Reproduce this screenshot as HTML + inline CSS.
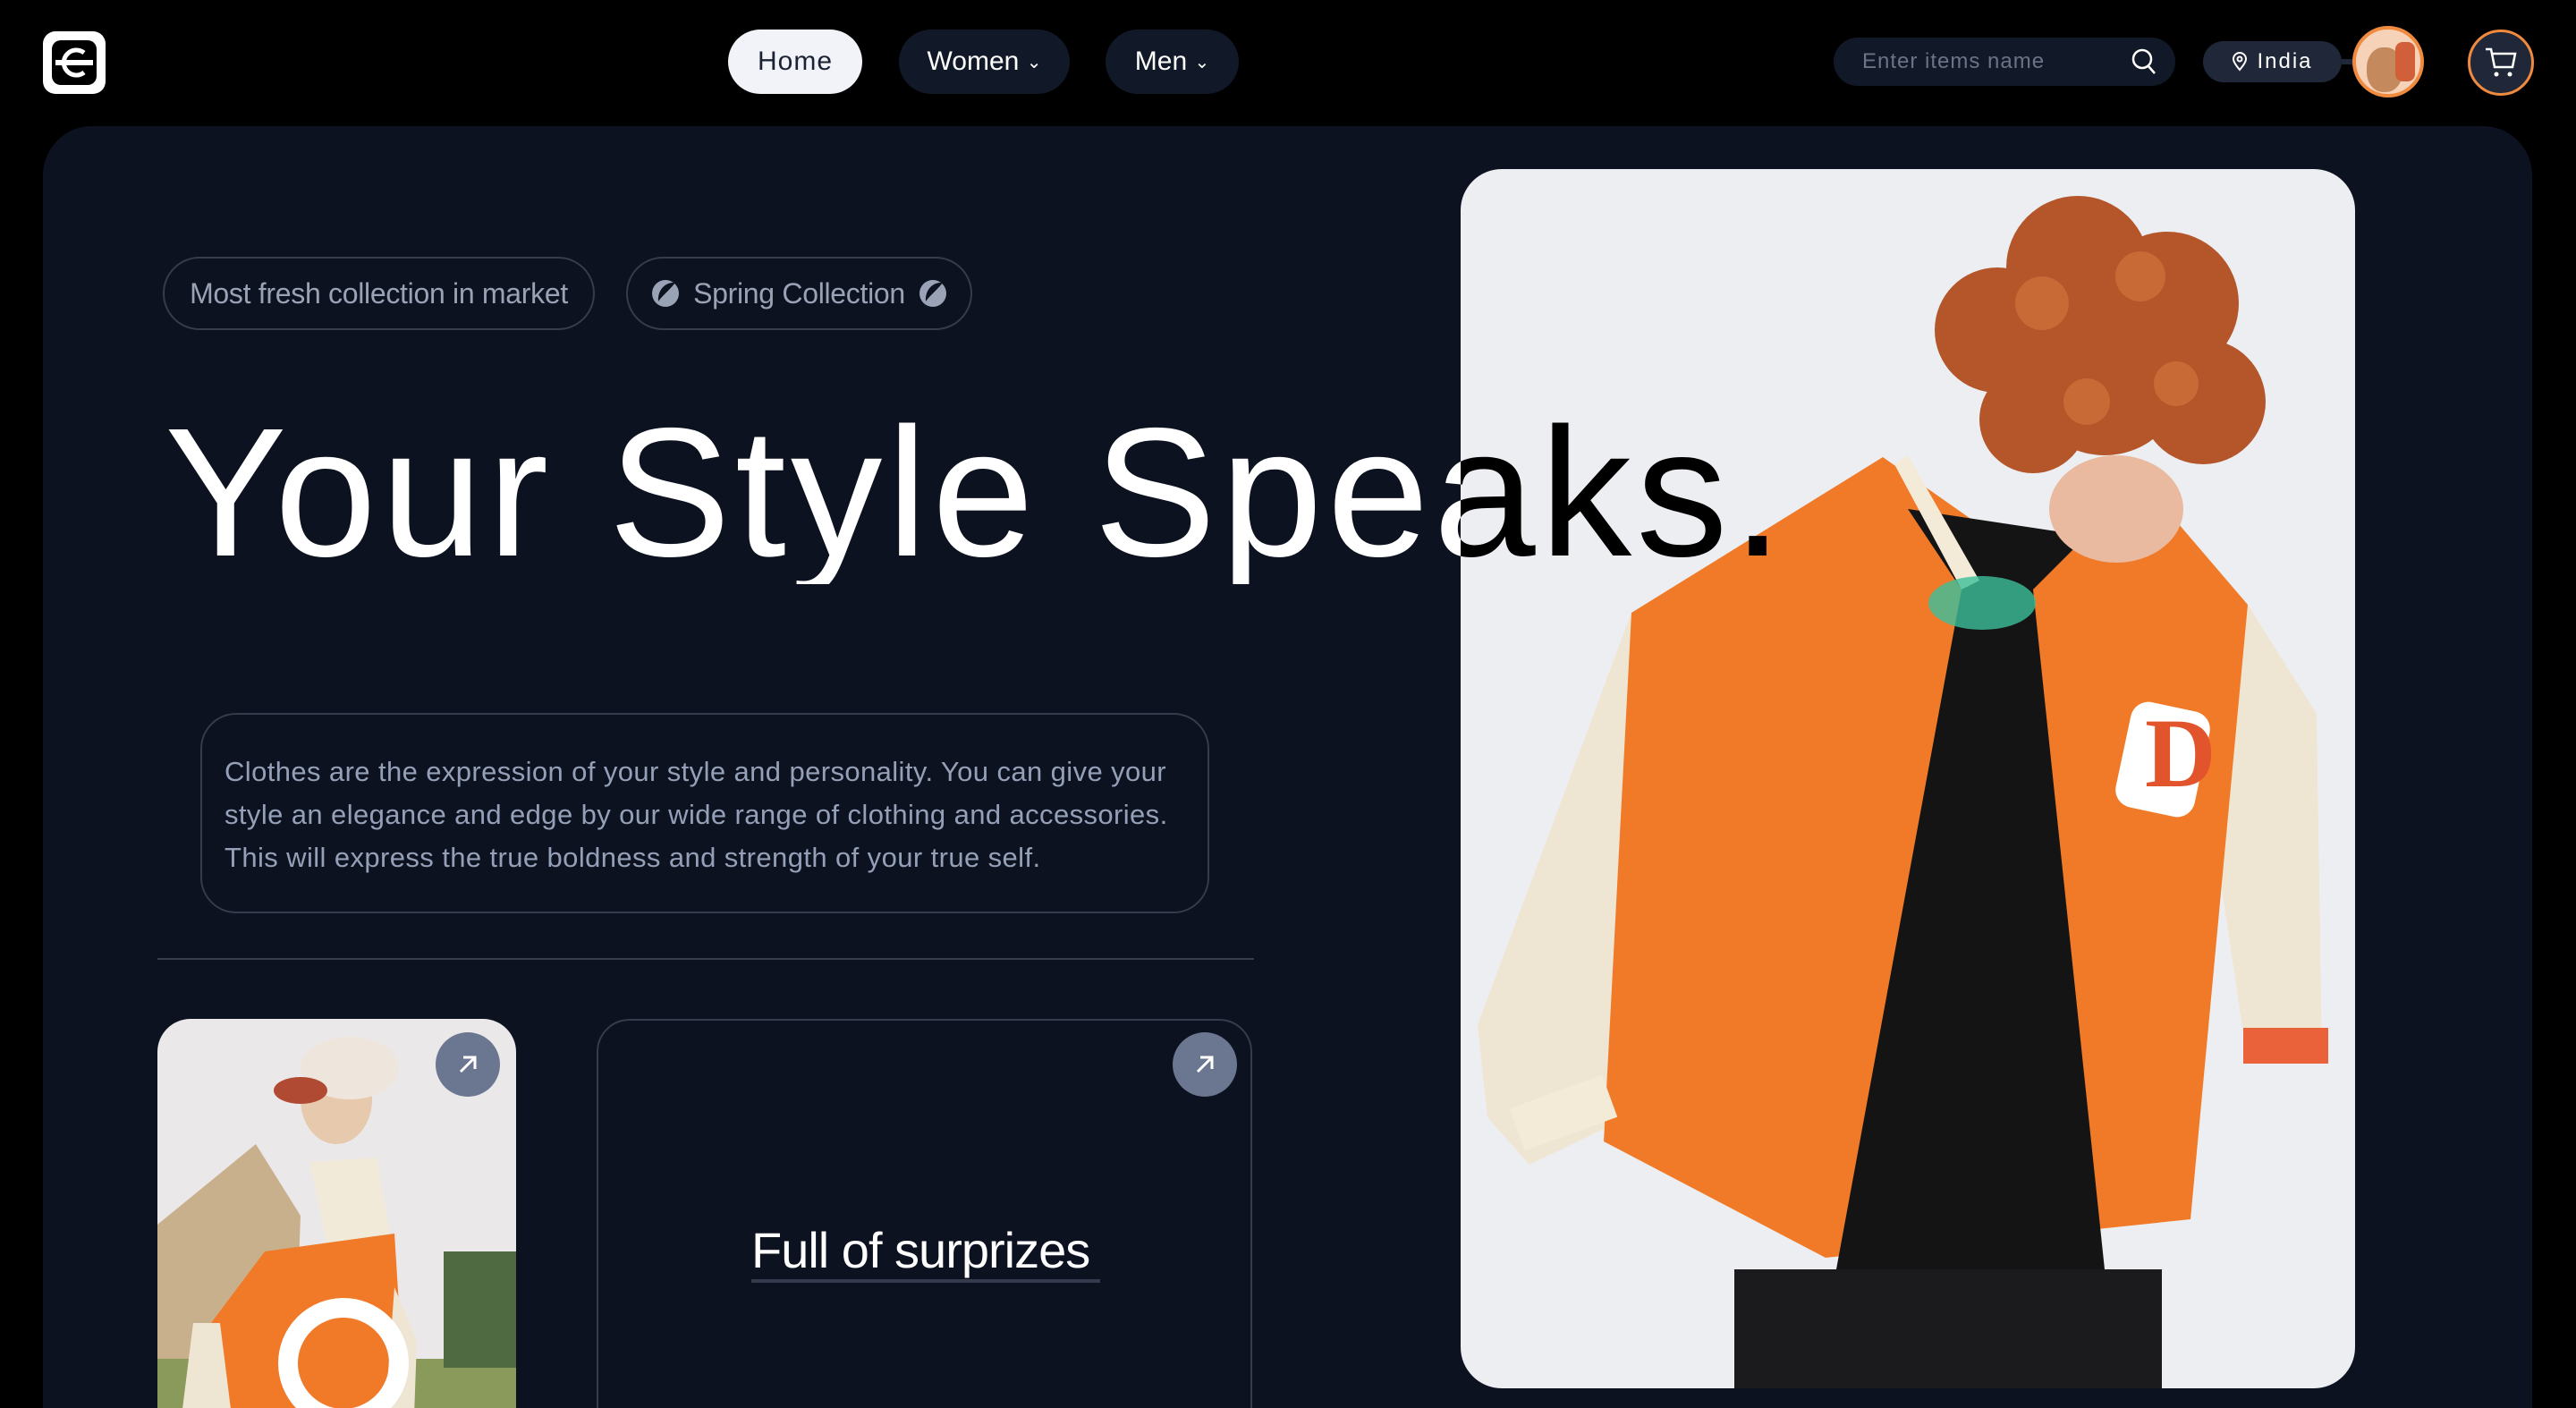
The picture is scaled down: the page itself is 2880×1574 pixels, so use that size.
<!DOCTYPE html>
<html><head><meta charset="utf-8"><style>
*{margin:0;padding:0;box-sizing:border-box}
html,body{width:2880px;height:1574px;background:#000;overflow:hidden;font-family:"Liberation Sans",sans-serif;position:relative}
.abs{position:absolute}
.pill{position:absolute;border-radius:40px;display:flex;align-items:center;justify-content:center;font-family:"Liberation Sans Narrow","Liberation Sans",sans-serif;font-size:30px;color:#fff;background:#111827}
.panel{left:48px;top:141px;width:2783px;height:1500px;background:#0d1220;border-radius:55px}
.tag{position:absolute;height:82px;border:2px solid #343c4d;border-radius:41px;color:#9aa3b5;font-size:32px;display:flex;align-items:center;justify-content:center;letter-spacing:-0.3px}
.h1{left:184px;top:448px;font-size:205px;line-height:205px;letter-spacing:5px;white-space:nowrap;z-index:5}
.desc{left:224px;top:797px;width:1128px;height:224px;border:2px solid #343c4d;border-radius:40px}
.desc div{position:absolute;left:25px;font-size:31px;color:#94a0b8;white-space:nowrap;letter-spacing:0.4px}
.arrow{position:absolute;width:72px;height:72px;border-radius:50%;background:#6b7790}
</style></head><body>
<!-- logo -->
<div class="abs" style="left:48px;top:35px;width:70px;height:70px;background:#fff;border-radius:14px"></div>
<div class="abs" style="left:58px;top:45px;width:50px;height:50px;background:#000;border-radius:10px"></div>
<svg class="abs" style="left:48px;top:35px" width="70" height="70" viewBox="0 0 70 70"><path d="M14 35h42" stroke="#fff" stroke-width="6"/><path d="M46 24a14 14 0 1 0 0 22" fill="none" stroke="#fff" stroke-width="5"/></svg>

<div class="pill" style="left:814px;top:33px;width:150px;height:72px;background:#f1f3f8;color:#1a2233;letter-spacing:1px">Home</div>
<div class="pill" style="left:1005px;top:33px;width:191px;height:72px">Women&nbsp;<span style="font-size:20px">⌄</span></div>
<div class="pill" style="left:1236px;top:33px;width:149px;height:72px">Men&nbsp;<span style="font-size:20px">⌄</span></div>

<div class="pill" style="left:2050px;top:42px;width:382px;height:54px;justify-content:flex-start;padding-left:32px;font-size:24px;color:#6b7486;letter-spacing:1px">Enter items name</div>
<svg class="abs" style="left:2382px;top:53px" width="30" height="32" viewBox="0 0 30 32"><circle cx="13" cy="13" r="10" fill="none" stroke="#fff" stroke-width="2.5"/><path d="M20 21l7 8" stroke="#fff" stroke-width="2.5"/></svg>
<div class="pill" style="left:2463px;top:46px;width:155px;height:46px;background:#1f2738;font-size:24px;letter-spacing:2px"><svg width="18" height="22" viewBox="0 0 18 22" style="margin-right:10px"><path d="M9 20C3 13 2 10 2 8a7 7 0 0 1 14 0c0 2-1 5-7 12z" fill="none" stroke="#fff" stroke-width="2"/><circle cx="9" cy="8" r="2.5" fill="none" stroke="#fff" stroke-width="2"/></svg>India</div>
<div class="abs" style="left:2618px;top:66px;width:20px;height:6px;background:#1f2738"></div>
<div class="abs" style="left:2630px;top:29px;width:80px;height:80px;border-radius:50%;border:4px solid #f08a3e;background:#f6d2b8;overflow:hidden"><div class="abs" style="left:12px;top:20px;width:40px;height:50px;border-radius:45%;background:#c48a5e"></div><div class="abs" style="left:44px;top:14px;width:22px;height:44px;border-radius:8px;background:#d1603a"></div></div>
<div class="abs" style="left:2759px;top:33px;width:74px;height:74px;border-radius:50%;border:3px solid #f08a3e;background:#1f2738"></div>
<svg class="abs" style="left:2776px;top:50px" width="40" height="40" viewBox="0 0 40 40"><path d="M3 5h6l4 20h20l3-15H11" fill="none" stroke="#fff" stroke-width="2.5"/><circle cx="15" cy="33" r="2.5" fill="#fff"/><circle cx="30" cy="33" r="2.5" fill="#fff"/></svg>

<div class="abs panel"></div>

<div class="tag" style="left:182px;top:287px;width:483px">Most fresh collection in market</div>
<div class="tag" style="left:700px;top:287px;width:387px"><svg width="34" height="34" viewBox="0 0 34 34" style="margin-right:14px"><circle cx="17" cy="17" r="15" fill="#9aa3b5"/><path d="M28 5C18 4 8 12 9 26c4-6 10-10 19-21z" fill="#0d1220"/></svg>Spring Collection<svg width="34" height="34" viewBox="0 0 34 34" style="margin-left:14px"><circle cx="17" cy="17" r="15" fill="#9aa3b5"/><path d="M28 5C18 4 8 12 9 26c4-6 10-10 19-21z" fill="#0d1220"/></svg></div>

<!-- big image -->
<div class="abs" style="left:1633px;top:189px;width:1000px;height:1363px;border-radius:46px;overflow:hidden;background:#eceef1">
<svg width="1000" height="1363" viewBox="0 0 1000 1363">
<rect x="306" y="1230" width="478" height="140" fill="#1b1b1d"/>
<polygon points="191,496 19,957 30,1060 77,1113 166,1070 274,713" fill="#efe5d3"/>
<polygon points="880,487 957,609 963,1000 880,1000 848,783" fill="#efe5d3"/>
<polygon points="472,322 191,496 160,1087 408,1217 816,1174 880,487 791,383 640,440" fill="#f07a28"/>
<polygon points="500,380 700,410 640,470 720,1230 420,1230 560,470" fill="#141414"/>
<ellipse cx="733" cy="380" rx="75" ry="60" fill="#e9b9a0"/>
<g fill="#b4552a">
<circle cx="600" cy="180" r="70"/><circle cx="690" cy="110" r="80"/><circle cx="790" cy="150" r="80"/><circle cx="830" cy="260" r="70"/><circle cx="640" cy="280" r="60"/><circle cx="720" cy="230" r="90"/>
</g>
<g fill="#c76a36"><circle cx="650" cy="150" r="30"/><circle cx="760" cy="120" r="28"/><circle cx="800" cy="240" r="25"/><circle cx="700" cy="260" r="26"/></g>
<polygon points="485,330 560,470 580,460 500,320" fill="#f3ead8"/>
<rect x="740" y="600" width="90" height="120" rx="20" fill="#fff" transform="rotate(12 785 660)"/>
<text x="765" y="690" font-size="110" font-family="Liberation Serif" font-weight="bold" fill="#e2552c">D</text>
<rect x="60" y="1030" width="110" height="50" fill="#f3ead8" transform="rotate(-20 115 1055)"/>
<rect x="875" y="960" width="95" height="40" fill="#e9623a"/>
<ellipse cx="583" cy="485" rx="60" ry="30" fill="#3cbf9a" opacity=".8"/>
</svg></div>

<div class="abs h1" style="color:#fff;clip-path:polygon(0 0,1449px 0,1449px 100%,0 100%)">Your Style Speaks.</div>
<div class="abs h1" style="color:#000;clip-path:polygon(1449px 0,3000px 0,3000px 100%,1449px 100%)">Your Style Speaks.</div>

<div class="abs desc">
<div style="top:46px">Clothes are the expression of your style and personality. You can give your</div>
<div style="top:94px">style an elegance and edge by our wide range of clothing and accessories.</div>
<div style="top:142px">This will express the true boldness and strength of your true self.</div>
</div>

<div class="abs" style="left:176px;top:1071px;width:1226px;height:2px;background:#343c4d"></div>

<!-- card 1 -->
<div class="abs" style="left:176px;top:1139px;width:401px;height:500px;border-radius:37px;overflow:hidden;background:#ebe8ea">
<svg width="401" height="500" viewBox="0 0 401 500">
<polygon points="0,230 110,140 160,220 150,500 0,500" fill="#c9b08d"/>
<rect x="0" y="380" width="401" height="120" fill="#8a9a5a"/>
<rect x="320" y="260" width="81" height="130" fill="#4f6a40"/>
<polygon points="170,160 245,155 265,270 200,300" fill="#f2ead8"/>
<polygon points="60,340 120,260 265,240 275,400 250,500 50,500" fill="#f07a28"/>
<polygon points="40,340 70,340 90,500 20,500" fill="#efe5d3"/>
<polygon points="265,300 290,360 285,500 250,500" fill="#efe5d3"/>
<ellipse cx="200" cy="90" rx="40" ry="50" fill="#e7c9ad"/>
<ellipse cx="215" cy="55" rx="55" ry="35" fill="#eee6dc"/>
<ellipse cx="160" cy="80" rx="30" ry="15" fill="#b14a33"/>
<circle cx="208" cy="385" r="62" fill="none" stroke="#fff" stroke-width="22"/>
</svg></div>
<div class="arrow" style="left:487px;top:1154px"></div>
<svg class="abs" style="left:505px;top:1172px" width="36" height="36" viewBox="0 0 36 36"><path d="M10 26L26 10M13 10h13v13" fill="none" stroke="#fff" stroke-width="3"/></svg>

<!-- card 2 -->
<div class="abs" style="left:667px;top:1139px;width:733px;height:500px;border:2px solid #343c4d;border-radius:37px"></div>
<div class="arrow" style="left:1311px;top:1154px"></div>
<svg class="abs" style="left:1329px;top:1172px" width="36" height="36" viewBox="0 0 36 36"><path d="M10 26L26 10M13 10h13v13" fill="none" stroke="#fff" stroke-width="3"/></svg>
<div class="abs" style="left:840px;top:1365px;font-size:56px;color:#fff;letter-spacing:-1px;white-space:nowrap">Full of surprizes</div>
<div class="abs" style="left:840px;top:1430px;width:390px;height:4px;background:#343c4d"></div>
</body></html>
